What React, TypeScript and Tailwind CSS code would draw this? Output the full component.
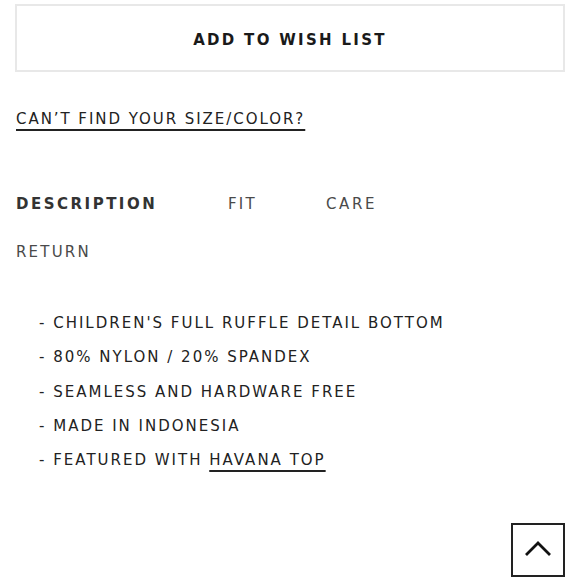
const font = { fontFamily: '"DejaVu Sans", "Liberation Sans", sans-serif' }

const details = [
  "CHILDREN'S FULL RUFFLE DETAIL BOTTOM",
  '80% NYLON / 20% SPANDEX',
  'SEAMLESS AND HARDWARE FREE',
  'MADE IN INDONESIA',
]

export default function App() {
  return (
    <div className="relative h-[580px] w-[580px] overflow-hidden bg-white text-[#1a1a1a]" style={font}>
      <div className="px-[15px] pt-[4px]">
        <button className="flex h-[68px] w-full items-center justify-center border-2 border-[#e8e8e8] pt-[4px] text-[15px] font-bold leading-[20px] tracking-[2.3px] text-[#1a1a1a]">
          ADD TO WISH LIST
        </button>
      </div>

      <div className="px-[16px] pt-[37px] leading-[20px]">
        <a href="#" className="text-[15px] tracking-[1.95px] text-[#222] underline decoration-[1.5px] underline-offset-[5px]">
          CAN&#8217;T FIND YOUR SIZE/COLOR?
        </a>
      </div>

      <div className="px-[16px] pt-[65px]">
        <div className="flex items-center text-[15px] leading-[20px] tracking-[2.2px] text-[#4a4a4a]">
          <span className="w-[212px] font-bold tracking-[2.5px] text-[#333]">DESCRIPTION</span>
          <span className="w-[98px]">FIT</span>
          <span className="tracking-[2.6px]">CARE</span>
        </div>
        <div className="mt-[28px] text-[15px] leading-[20px] tracking-[2.2px] text-[#4a4a4a]">RETURN</div>
      </div>

      <ul className="flex flex-col gap-[14.25px] pl-[39px] pt-[51px] text-[15px] leading-[20px] tracking-[2px] text-[#222]">
        {details.map((d) => (
          <li key={d}>- {d}</li>
        ))}
        <li>
          - FEATURED WITH{' '}
          <a href="#" className="underline decoration-[1.5px] underline-offset-[5px]">HAVANA TOP</a>
        </li>
      </ul>

      <button className="absolute left-[511px] top-[523px] flex h-[54px] w-[54px] items-center justify-center border-2 border-[#222] bg-white pb-[3px]">
        <svg width="28" height="16" viewBox="0 0 28 16" fill="none" stroke="#111" strokeWidth="2.8">
          <path d="M2 14 L14 2 L26 14" />
        </svg>
      </button>
    </div>
  )
}
